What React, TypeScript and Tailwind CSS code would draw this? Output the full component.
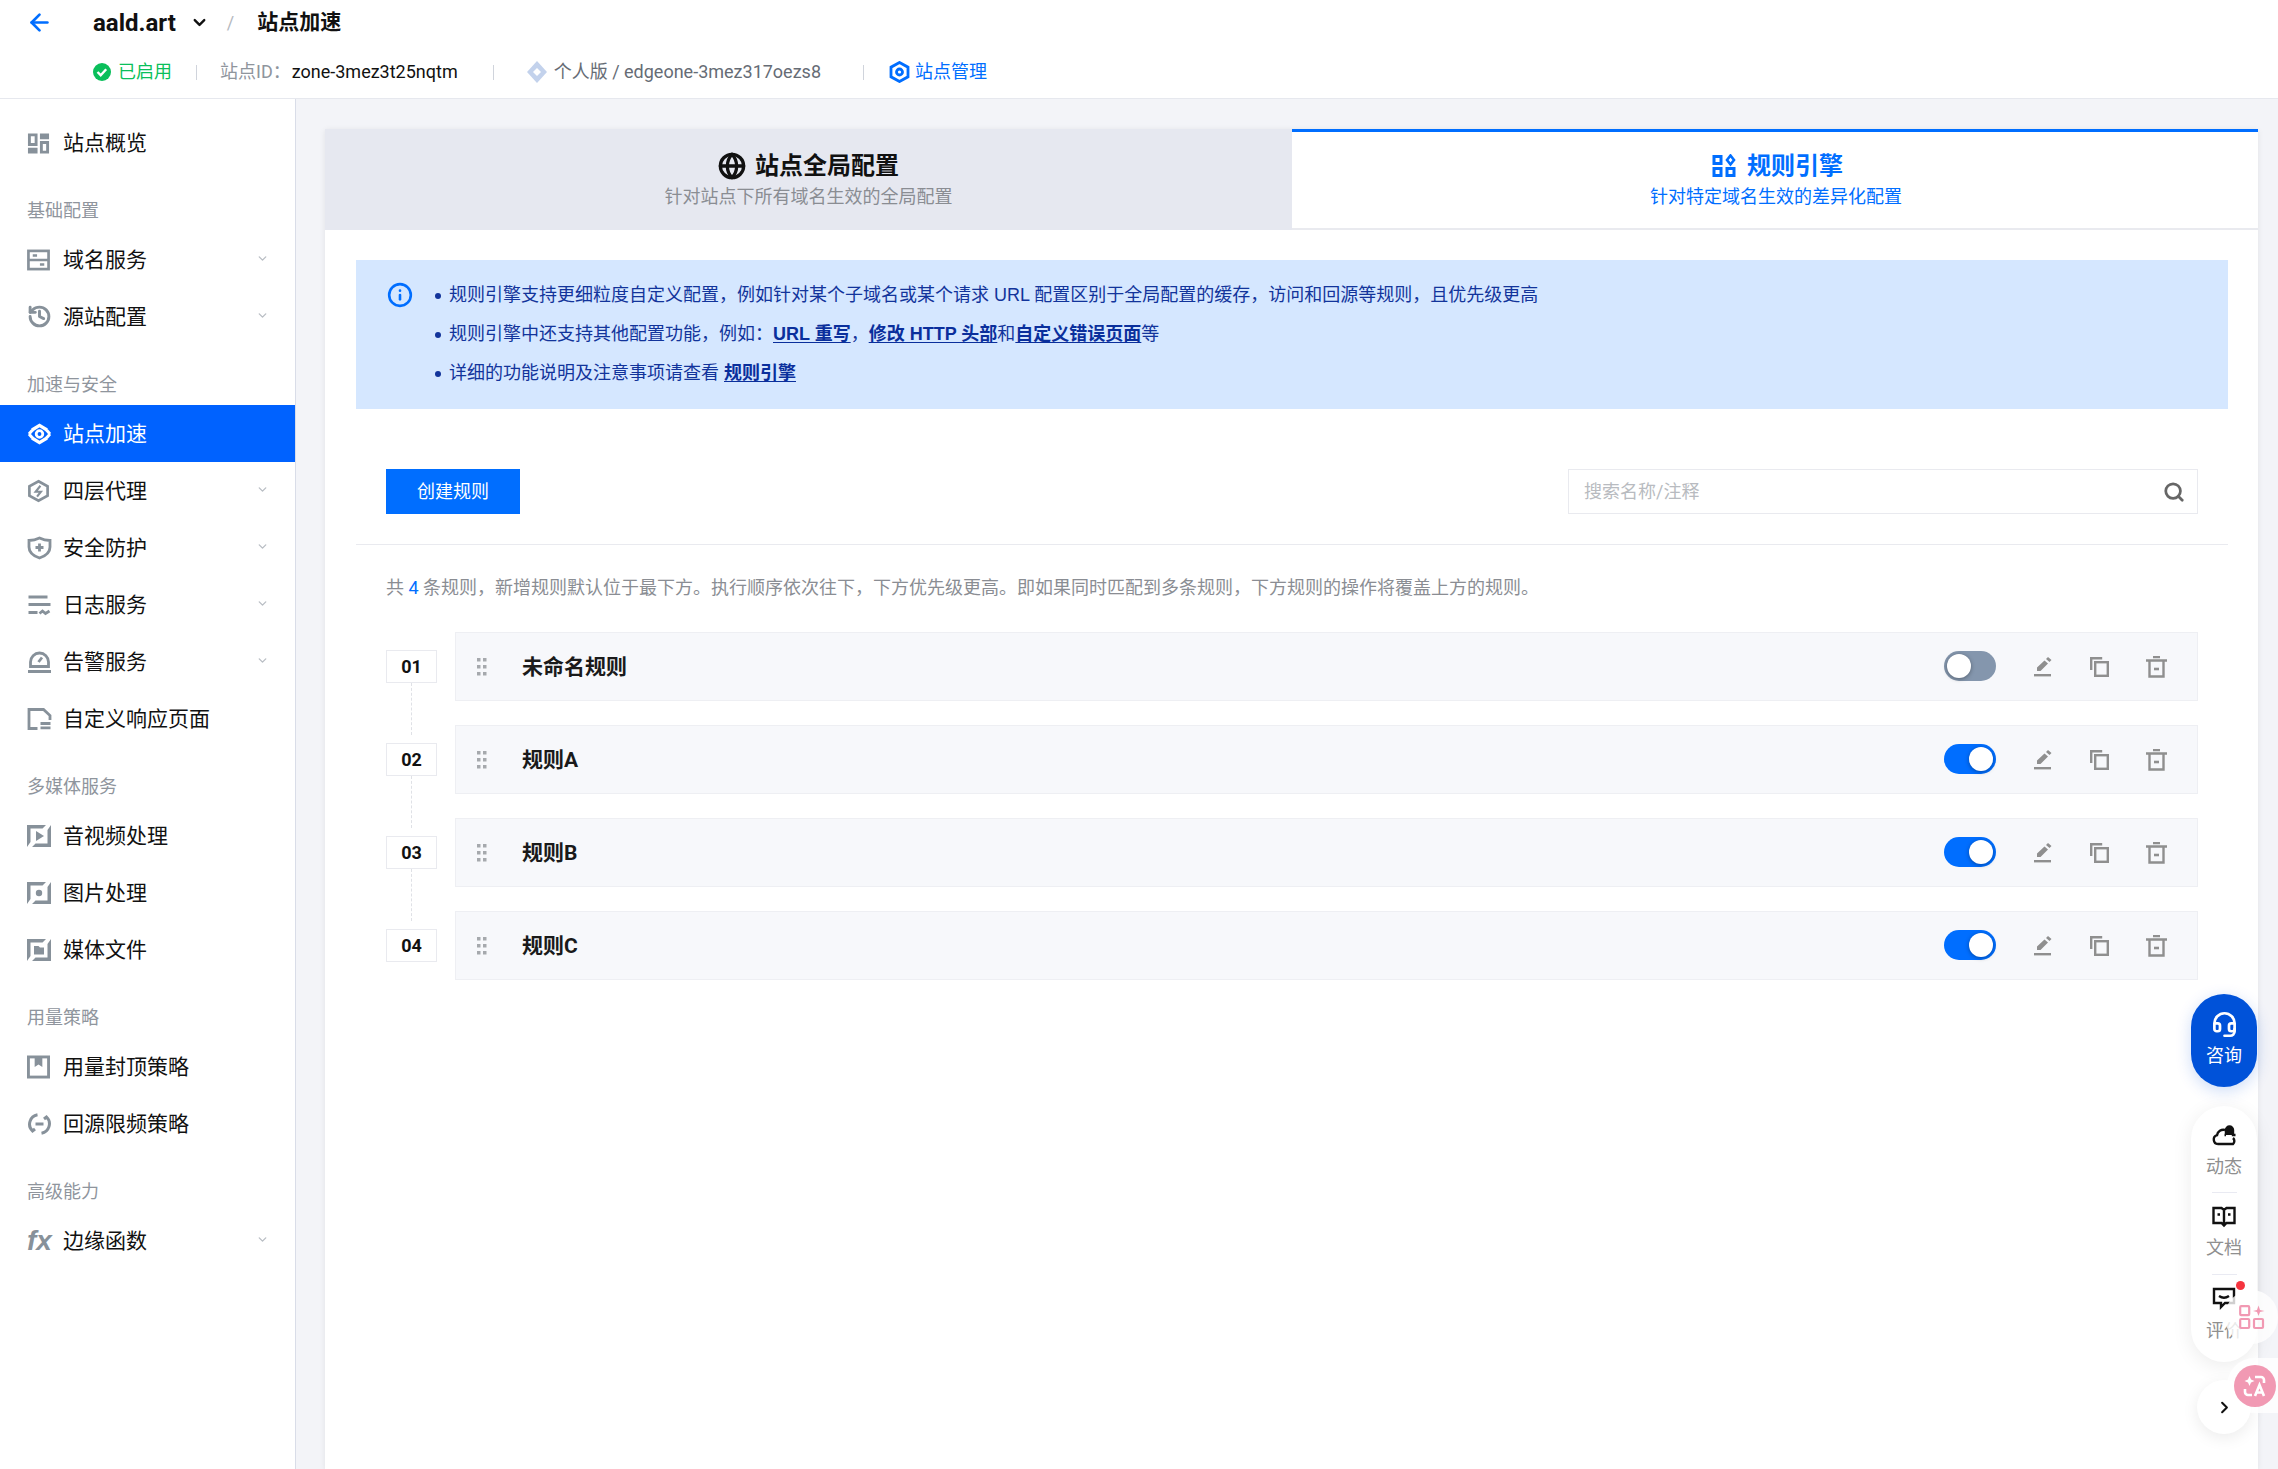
import { ArrowLeft, ChevronDown, ChevronRight, Globe, History, Info, Search, Headset } from 'lucide-react'

const G = '#87919a'

function FrameIcon({ children }: { children?: React.ReactNode }) {
  return (
    <svg width="24" height="24" viewBox="0 0 24 24" fill="none">
      <path d="M0 1h19l-3.500 3.500H3.500V18L0 23zM24 23H5l3.500-3.500h12V6L24 1z" fill={G} />
      {children}
    </svg>
  )
}

const icons: Record<string, React.ReactNode> = {
  overview: (
    <svg width="23" height="24" viewBox="0 0 24 24" fill={G}>
      <path d="M1 2h10v13H1zM4 5v7h4V5zM13.500 2H23v6h-9.500zM1 17h10v6H1zM13.500 10H23v13h-9.500zM16.500 13v7H20v-7z" fillRule="evenodd" />
    </svg>
  ),
  domain: (
    <svg width="23" height="24" viewBox="0 0 24 24" fill="none" stroke={G} strokeWidth="2.800">
      <rect x="1.500" y="2.500" width="21" height="19" />
      <path d="M1 12h22M6 7.300h4.500M13.500 16.700H18" />
    </svg>
  ),
  origin: <History size={25} color={G} strokeWidth={2.800} />,
  speed: (
    <svg width="25" height="24" viewBox="0 0 24 24" fill="none" stroke="#fff" strokeWidth="3.400">
      <path d="M4.500 8 12 3.400 19.500 8M19.500 16 12 20.600 4.500 16" />
      <path d="M1.500 12 5 8M22.500 12 19 16M1.500 12 5 16M22.500 12 19 8" strokeWidth="3" />
      <circle cx="12" cy="12" r="3.300" strokeWidth="2.800" />
    </svg>
  ),
  l4: (
    <svg width="23" height="24" viewBox="0 0 24 24" fill="none" stroke={G} strokeWidth="2.800">
      <path d="M12 1.800 21.500 7v10L12 22.200 2.500 17V7z" />
      <path d="M14 6.500 9 12.800h5.500l-4 5" strokeWidth="2.200" />
    </svg>
  ),
  shield: (
    <svg width="25" height="24" viewBox="0 0 24 24" fill="none" stroke={G} strokeWidth="2.800">
      <path d="M1.500 4.500C6 4.500 9 3.500 12 2c3 1.500 6 2.500 10.500 2.500V11c0 5.500-4.500 9-10.500 11C6 20 1.500 16.500 1.500 11z" />
      <path d="M12 7.500v8M8 11.500h8" />
    </svg>
  ),
  log: (
    <svg width="25" height="24" viewBox="0 0 24 24" fill="none" stroke={G} strokeWidth="2.800">
      <path d="M1 4h19M1 11.500h22M1 19.500h9M12 20.500l3-2.500 3 2.500 4-2.500" />
    </svg>
  ),
  alarm: (
    <svg width="25" height="24" viewBox="0 0 24 24" fill="none" stroke={G} strokeWidth="2.800">
      <path d="M3 16.500V12a9 9 0 0 1 18 0v4.500zM0.500 21.500h23" />
      <path d="M11 12l3.500-4.500" />
    </svg>
  ),
  page: (
    <svg width="25" height="24" viewBox="0 0 24 24" fill="none" stroke={G} strokeWidth="2.800">
      <path d="M10 21.500H1.500V2.500H16l6.500 6V13" />
      <path d="M13 16.500h10M13 20.800h10" />
    </svg>
  ),
  video: <FrameIcon><path d="M9 7l8 5-8 5z" fill={G} /></FrameIcon>,
  image: <FrameIcon><circle cx="12" cy="12" r="3.200" fill={G} /></FrameIcon>,
  media: <FrameIcon><path d="M7 8h4.500l1.500 1.500h4V16.500H7z" fill={G} /></FrameIcon>,
  cap: (
    <svg width="23" height="24" viewBox="0 0 24 24" fill="none" stroke={G} strokeWidth="3">
      <rect x="1.500" y="1.500" width="21" height="21" />
      <path d="M8 2v10l4-2.500 4 2.500V2z" fill={G} stroke="none" />
    </svg>
  ),
  limit: (
    <svg width="25" height="24" viewBox="0 0 24 24" fill="none" stroke={G} strokeWidth="3">
      <path d="M10 2.800A9.500 9.500 0 0 0 5 19l2.500-2M14 21.200A9.500 9.500 0 0 0 19 5l-2.500 2" />
      <path d="M8 12h8" />
    </svg>
  ),
}

type NavItem = { label: string; icon?: string; arrow?: boolean; active?: boolean; group?: boolean }

const nav: NavItem[] = [
  { label: '站点概览', icon: 'overview' },
  { label: '基础配置', group: true },
  { label: '域名服务', icon: 'domain', arrow: true },
  { label: '源站配置', icon: 'origin', arrow: true },
  { label: '加速与安全', group: true },
  { label: '站点加速', icon: 'speed', active: true },
  { label: '四层代理', icon: 'l4', arrow: true },
  { label: '安全防护', icon: 'shield', arrow: true },
  { label: '日志服务', icon: 'log', arrow: true },
  { label: '告警服务', icon: 'alarm', arrow: true },
  { label: '自定义响应页面', icon: 'page' },
  { label: '多媒体服务', group: true },
  { label: '音视频处理', icon: 'video' },
  { label: '图片处理', icon: 'image' },
  { label: '媒体文件', icon: 'media' },
  { label: '用量策略', group: true },
  { label: '用量封顶策略', icon: 'cap' },
  { label: '回源限频策略', icon: 'limit' },
  { label: '高级能力', group: true },
  { label: '边缘函数', icon: 'fx', arrow: true },
]

function Sidebar() {
  return (
    <aside className="w-[296px] shrink-0 border-r border-[#d9dde8] bg-white pt-[15px]">
      {nav.map(item =>
        item.group ? (
          <div key={item.label} className="flex h-[60px] items-end pb-[8px] pl-[27px] text-[18px] leading-[24px] text-[#8f959d]">
            {item.label}
          </div>
        ) : (
          <div
            key={item.label}
            className={
              item.active
                ? 'flex h-[57px] items-center bg-[#0062ff] pl-[27px] pr-[26px] text-white'
                : 'flex h-[57px] items-center pl-[27px] pr-[26px] text-[#111]'
            }
          >
            <span className="flex w-[36px] shrink-0 items-center">
              {item.icon === 'fx' ? (
                <span className="text-[28px] leading-none font-bold italic text-[#87919a] font-['Liberation_Sans',sans-serif]">fx</span>
              ) : (
                icons[item.icon ?? '']
              )}
            </span>
            <span className="flex-1 text-[21px] leading-[28px]">{item.label}</span>
            {item.arrow && <ChevronDown size={13} color="#b9bec4" strokeWidth={2.500} className="mb-[3px]" />}
          </div>
        )
      )}
    </aside>
  )
}

function Header() {
  const sep = 'h-[15px] w-px bg-[#d0d4dc]'
  return (
    <header className="h-[99px] shrink-0 border-b border-[#e6e8ee] bg-white">
      <div className="flex h-[45px] items-center pl-[26px]">
        <ArrowLeft size={27} color="#006eff" strokeWidth={2.400} />
        <span className="ml-[40px] text-[24px] leading-none font-bold text-[#111]">aald.art</span>
        <ChevronDown size={19} color="#111" strokeWidth={3} className="ml-[14px]" />
        <span className="ml-[18px] text-[18px] text-[#b5b9bf]">/</span>
        <span className="ml-[23px] text-[21px] font-bold text-[#111]">站点加速</span>
      </div>
      <div className="mt-[15px] flex items-center pl-[93px] text-[18px] leading-[24px]">
        <svg width="18" height="18" viewBox="0 0 18 18">
          <circle cx="9" cy="9" r="9" fill="#0abf5b" />
          <path d="M4.500 9l3.200 3.200 5.500-6" fill="none" stroke="#fff" strokeWidth="2.400" />
        </svg>
        <span className="ml-[7px] text-[#0abf5b]">已启用</span>
        <span className={`ml-[24px] mr-[23px] ${sep}`} />
        <span className="text-[#8f959d]">站点ID：</span>
        <span className="ml-[1px] text-[#111]">zone-3mez3t25nqtm</span>
        <span className={`ml-[35px] mr-[32px] ${sep}`} />
        <svg width="22" height="24" viewBox="0 0 22 24">
          <path d="M11 1 21 12 11 23 1 12z" fill="#c3d2ec" />
          <path d="M11 8l4 4-4 4-4-4z" fill="#fff" />
        </svg>
        <span className="ml-[6px] text-[#666c75]">个人版 / edgeone-3mez317oezs8</span>
        <span className={`ml-[42px] mr-[25px] ${sep}`} />
        <svg width="21" height="22" viewBox="0 0 21 22" fill="none" stroke="#006eff" strokeWidth="2.800">
          <path d="M10.500 1.500 19 6.200v9.600l-8.500 4.700L2 15.800V6.200z" />
          <circle cx="10.500" cy="11" r="3" fill="none" />
        </svg>
        <span className="ml-[5px] text-[#006eff]">站点管理</span>
      </div>
    </header>
  )
}

function Tabs() {
  return (
    <div className="flex h-[101px] shrink-0">
      <div className="flex w-[967px] flex-col items-center bg-[#e6e8f0] pt-[22px]">
        <div className="flex h-[30px] items-center text-[24px] font-bold text-[#111]">
          <Globe size={28} color="#111" strokeWidth={2.800} className="mr-[9px]" />
          站点全局配置
        </div>
        <div className="mt-[3px] text-[18px] leading-[26px] text-[#8a8d93]">针对站点下所有域名生效的全局配置</div>
      </div>
      <div className="flex flex-1 flex-col items-center border-t-[3px] border-b-2 border-t-[#006eff] border-b-[#e9eaef] bg-white pl-[2px] pt-[19px]">
        <div className="flex h-[30px] items-center pl-[3px] text-[24px] font-bold text-[#006eff]">
          <svg width="24" height="24" viewBox="0 0 24 24" fill="none" stroke="#006eff" strokeWidth="3" className="mr-[11px]">
            <rect x="2" y="2.500" width="7" height="7" />
            <rect x="2" y="14.500" width="7" height="7" />
            <rect x="15" y="14.500" width="7" height="7" />
            <path d="M18.500 1.500l3.500 4.500-3.500 4.500L15 6z" strokeWidth="2.600" />
          </svg>
          规则引擎
        </div>
        <div className="mt-[3px] text-[18px] leading-[26px] text-[#006eff]">针对特定域名生效的差异化配置</div>
      </div>
    </div>
  )
}

function Bullet() {
  return <span className="mr-[8px] h-[6px] w-[6px] shrink-0 self-center rounded-full bg-[#12349b]" />
}

function Notice() {
  const link = 'font-bold text-[#0a2f9c] underline underline-offset-2'
  return (
    <div className="ml-[31px] mr-[30px] mt-[30px] flex h-[149px] bg-[#d5e7ff] pl-[31px] pt-[16px] text-[18px] leading-[39px] text-[#12349b] font-['Liberation_Sans','Noto_Sans_CJK_SC',sans-serif]">
      <Info size={26} color="#006eff" strokeWidth={2.400} className="mt-[6px] shrink-0" />
      <div className="ml-[22px]">
        <div className="flex"><Bullet />规则引擎支持更细粒度自定义配置，例如针对某个子域名或某个请求 URL 配置区别于全局配置的缓存，访问和回源等规则，且优先级更高</div>
        <div className="flex"><Bullet /><span>规则引擎中还支持其他配置功能，例如：<span className={link}>URL 重写</span>，<span className={link}>修改 HTTP 头部</span>和<span className={link}>自定义错误页面</span>等</span></div>
        <div className="flex"><Bullet /><span>详细的功能说明及注意事项请查看 <span className={link}>规则引擎</span></span></div>
      </div>
    </div>
  )
}

function Toggle({ on }: { on: boolean }) {
  return (
    <span
      className={
        on
          ? 'mb-[1px] flex h-[30px] w-[52px] items-center justify-end rounded-full bg-[#006eff] px-[3px]'
          : 'mb-[1px] flex h-[30px] w-[52px] items-center justify-start rounded-full bg-[#8496ad] px-[3px]'
      }
    >
      <span className="h-[24px] w-[24px] rounded-full bg-white shadow-[0_1px_4px_rgba(0,0,0,0.35)]" />
    </span>
  )
}

function RuleRow({ no, name, on, last }: { no: string; name: string; on: boolean; last?: boolean }) {
  return (
    <div className={last ? 'flex' : 'flex pb-[24px]'}>
      <div className="flex w-[51px] shrink-0 flex-col items-center pt-[18px]">
        <div className="flex h-[33px] w-[51px] items-center justify-center border border-[#e9eaef] bg-white text-[18px] font-bold text-[#111]">{no}</div>
        {!last && <div className="-mb-[34px] h-[52px] border-l border-dashed border-[#dfe1e6]" />}
      </div>
      <div className="ml-[18px] flex h-[69px] flex-1 items-center border border-[#eeeff3] bg-[#f7f8fb] pr-[30px]">
        <svg width="10" height="18" viewBox="0 0 10 18" fill="#a6a9ad" className="ml-[21px]">
          <rect x="0" y="0" width="3.500" height="3.500" /><rect x="6" y="0" width="3.500" height="3.500" />
          <rect x="0" y="7" width="3.500" height="3.500" /><rect x="6" y="7" width="3.500" height="3.500" />
          <rect x="0" y="14" width="3.500" height="3.500" /><rect x="6" y="14" width="3.500" height="3.500" />
        </svg>
        <span className="ml-[35px] flex-1 text-[21px] leading-[28px] font-bold text-[#1a1a1a]">{name}</span>
        <Toggle on={on} />
        <svg width="18" height="20" viewBox="0 0 18 20" fill="#8f8f8f" className="ml-[38px]">
          <path d="M10.500 3.500 14 6.500 6.500 14H3v-3.500zM12 2l2-2 3.500 3L15.500 5z" />
          <rect x="0" y="17" width="17" height="2.400" />
        </svg>
        <svg width="19" height="20" viewBox="0 0 19 20" fill="none" stroke="#8f8f8f" strokeWidth="2.400" className="ml-[38px]">
          <path d="M1.200 13V1.200h11" />
          <rect x="5.200" y="5.200" width="12.600" height="13.600" />
        </svg>
        <svg width="21" height="22" viewBox="0 0 21 22" fill="none" stroke="#8f8f8f" strokeWidth="2.400" className="ml-[37px]">
          <path d="M0 4.500h21M7 1h7M3.500 4.500v16h14v-16" />
          <path d="M8 13h5" strokeWidth="2.600" />
        </svg>
      </div>
    </div>
  )
}

function Floats() {
  return (
    <>
      <div className="absolute right-[21px] top-[994px] flex h-[93px] w-[66px] flex-col items-center rounded-full bg-[#0052d9] pt-[17px] text-white shadow-[0_4px_16px_rgba(0,82,217,0.2)]">
        <Headset size={27} color="#fff" strokeWidth={2.400} />
        <span className="mt-[6px] text-[18px] leading-[24px]">咨询</span>
      </div>
      <div className="absolute right-[21px] top-[1106px] flex h-[256px] w-[66px] flex-col items-center rounded-[33px] bg-white pt-[17px] text-[18px] leading-[24px] text-[#8f8f8f] shadow-[0_4px_20px_rgba(0,0,0,0.08)]">
        <svg width="24" height="24" viewBox="0 0 24 24" fill="none" stroke="#111" strokeWidth="2.400">
          <path d="M6 21a4.500 4.500 0 0 1-1-8.800A6.500 6.500 0 0 1 13 7M6 21h15a4 4 0 0 0 0-6" />
          <path d="M14 12V7a3.500 3.500 0 0 1 7 0v5h2.500M14 12h-1.500" fill="#111" />
        </svg>
        <span className="mt-[8px]">动态</span>
        <span className="mt-[13px] h-px w-[25px] shrink-0 bg-[#e9eaf2]" />
        <svg width="24" height="24" viewBox="0 0 24 24" fill="none" stroke="#111" strokeWidth="2.400" className="mt-[12px] shrink-0">
          <path d="M1.500 3h8l2.500 2 2.500-2h8v15h-8L12 20.500 9.500 18h-8zM12 5v15" />
          <path d="M5.500 9.500h2.500M16 9.500h2.500" />
        </svg>
        <span className="mt-[7px]">文档</span>
        <span className="mt-[14px] h-px w-[25px] shrink-0 bg-[#e9eaf2]" />
        <svg width="24" height="24" viewBox="0 0 24 24" fill="none" stroke="#111" strokeWidth="2.400" className="mt-[11px] shrink-0">
          <path d="M2 3h20v14h-9l-4 4v-4H2z" />
          <path d="M7 10c3 2 7 2 10 0" />
        </svg>
        <span className="mt-[9px]">评价</span>
      </div>
      <span className="absolute left-[2236px] top-[1281px] h-[9px] w-[9px] rounded-full bg-[#f5343f]" />
      <div className="absolute left-[2197px] top-[1380px] flex h-[54px] w-[54px] items-center justify-center rounded-full bg-white shadow-[0_4px_16px_rgba(0,0,0,0.08)]">
        <ChevronRight size={19} color="#111" strokeWidth={2.600} />
      </div>
      <div className="absolute left-[2225px] top-[1290px] flex h-[54px] w-[53px] items-center justify-center rounded-full bg-white/80">
        <svg width="26" height="26" viewBox="0 0 26 26" fill="none" stroke="#f199b3" strokeWidth="2.200">
          <rect x="1.200" y="2.200" width="9" height="9" rx="1" />
          <rect x="1.200" y="15" width="9" height="9" rx="1" />
          <rect x="15" y="15" width="9" height="9" rx="1" />
          <path d="M19.500 1.500l1.500 4.500 4.500 1-4.500 1-1.500 4-1.500-4-4-1 4-1z" fill="#f199b3" stroke="none" />
        </svg>
      </div>
      <div className="absolute left-[2227px] top-[1358px] flex h-[55px] w-[51px] items-center rounded-l-full bg-white/80 pl-[7px]">
        <span className="flex h-[42px] w-[42px] shrink-0 items-center justify-center rounded-full bg-[#f199b3]">
          <svg width="28" height="28" viewBox="0 0 28 28" fill="none" stroke="#fff" strokeWidth="2.600">
            <path d="M14 5h6a3 3 0 0 1 3 3v3M4 17v3a3 3 0 0 0 3 3h4" />
            <path d="M8.500 4l1.500 3.500L13.500 9 10 10.500 8.500 14 7 10.500 3.500 9 7 7.500z" fill="#fff" stroke="none" />
            <path d="M14 24l4.500-11L23 24M15.500 20.500h6" />
          </svg>
        </span>
      </div>
    </>
  )
}

export default function App() {
  return (
    <div className="relative flex h-[1469px] w-full flex-col overflow-hidden bg-[#f3f4f8] font-['Roboto','Noto_Sans_CJK_SC',sans-serif]">
      <Header />
      <div className="flex min-h-0 flex-1">
        <Sidebar />
        <main className="min-w-0 flex-1 pl-[29px] pr-[20px] pt-[30px]">
          <div className="flex h-full flex-col bg-white shadow-[0_1px_6px_rgba(0,0,0,0.08)]">
            <Tabs />
            <Notice />
            <div className="ml-[61px] mr-[60px] mt-[60px] flex items-center justify-between">
              <button className="h-[45px] w-[134px] bg-[#006eff] text-[18px] text-white">创建规则</button>
              <div className="flex h-[45px] w-[630px] items-center justify-between border border-[#e9eaef] pl-[15px] pr-[12px] text-[18px] text-[#b8bbc0]">
                搜索名称/注释
                <Search size={22} color="#666" strokeWidth={3} />
              </div>
            </div>
            <div className="ml-[31px] mr-[30px] mt-[30px] border-t border-[#e9eaef]" />
            <div className="ml-[61px] mr-[60px] mt-[30px] text-[18px] leading-[26px] text-[#8a8d93]">
              共 <span className="text-[#006eff]">4</span> 条规则，新增规则默认位于最下方。执行顺序依次往下，下方优先级更高。即如果同时匹配到多条规则，下方规则的操作将覆盖上方的规则。
            </div>
            <div className="ml-[61px] mr-[60px] mt-[31px]">
              <RuleRow no="01" name="未命名规则" on={false} />
              <RuleRow no="02" name="规则A" on />
              <RuleRow no="03" name="规则B" on />
              <RuleRow no="04" name="规则C" on last />
            </div>
          </div>
        </main>
      </div>
      <Floats />
    </div>
  )
}
